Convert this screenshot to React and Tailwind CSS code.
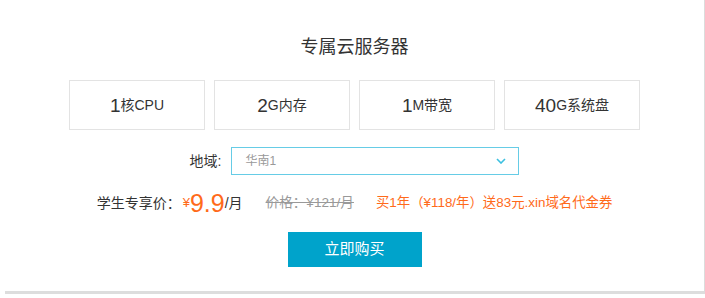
import React from 'react';

const specs = [
    { num: '1', unit: '核CPU' },
    { num: '2', unit: 'G内存' },
    { num: '1', unit: 'M带宽' },
    { num: '40', unit: 'G系统盘' },
];

const font = { fontFamily: '"Liberation Sans", "Noto Sans CJK SC", sans-serif' };

const App = () => {
    return (
        <div className="w-[705px] h-[298px] bg-white" style={font}>
            <div className="ml-[5px] w-[700px] h-[294px] bg-white border-r border-r-[#dcdcdc] border-b-[3px] border-b-[#dddddd] flex flex-col items-center">
                <h2 className="pt-[35px] text-[18px] leading-[24px] text-[#333]">专属云服务器</h2>

                <div className="mt-[21px] flex gap-[9px]">
                    {specs.map((s, i) => (
                        <div
                            key={i}
                            className="w-[136px] h-[50px] border border-[#e3e3e3] flex items-center justify-center text-[#333]"
                        >
                            <span className="text-[19px] leading-none">{s.num}</span>
                            <span className="text-[14px] leading-none">{s.unit}</span>
                        </div>
                    ))}
                </div>

                <div className="mt-[17px] flex items-center h-[28px]">
                    <span className="text-[14px] text-[#333] mr-[10px]">地域:</span>
                    <div className="w-[288px] h-[28px] border border-[#66cce6] flex items-center justify-between pl-[13px] pr-[12px]">
                        <span className="text-[12px] text-[#999]">华南1</span>
                        <svg width="10" height="6" viewBox="0 0 10 6" fill="none">
                            <path d="M1 1l4 4 4-4" stroke="#3cc0e0" strokeWidth="1.6" />
                        </svg>
                    </div>
                </div>

                <div className="mt-[15px] h-[26px] flex items-center text-[14px] whitespace-nowrap">
                    <span className="text-[#333]">学生专享价：</span>
                    <span className="text-[#ff6a1a] text-[13px] ml-[2px]">¥</span>
                    <span className="text-[#ff6a1a] text-[25px] leading-none">9.9</span>
                    <span className="text-[#333]">/月</span>
                    <span className="ml-[23px] text-[#999] text-[13.6px] line-through">价格：¥121/月</span>
                    <span className="ml-[22px] text-[#ff6a1a] text-[13.4px]">买1年（¥118/年）送83元.xin域名代金券</span>
                </div>

                <button className="mt-[16px] w-[134px] h-[35px] bg-[#00a3cb] text-white text-[15px]">
                    立即购买
                </button>
            </div>
        </div>
    );
};

export default App;
